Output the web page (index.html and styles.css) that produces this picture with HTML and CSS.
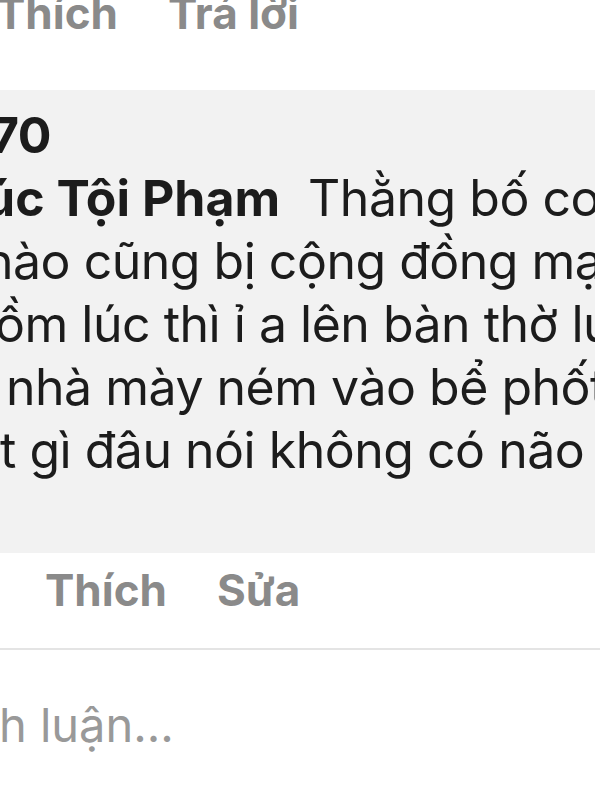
FILE: index.html
```
<!DOCTYPE html>
<html lang="vi">
<head>
    <meta charset="UTF-8">
    <meta name="viewport" content="width=device-width, initial-scale=1.0">
    <title>Bình luận</title>
    <link rel="stylesheet" href="styles.css">
</head>
<body>
    <div class="screen">
        <div class="actions actions-prev">
            <span class="action">Thích</span>
            <span class="action">Trả lời</span>
        </div>

        <div class="comment">
            <div class="bubble">
                <div class="line author">70</div>
                <div class="line"><span class="tag">úc Tội Phạm</span>Thằng bố con</div>
                <div class="line">nào cũng bị cộng đồng mạng</div>
                <div class="line shift-sm">ồm lúc thì ỉ a lên bàn thờ lu</div>
                <div class="line shift-lg">nhà mày ném vào bể phốt</div>
                <div class="line shift-none">t gì đâu nói không có não</div>
            </div>
            <div class="actions actions-own">
                <span class="action">Thích</span>
                <span class="action">Sửa</span>
            </div>
        </div>

        <div class="composer">
            <span class="placeholder">Bình luận...</span>
        </div>
    </div>
</body>
</html>
```

FILE: styles.css
```
body {
    margin: 0;
    background-color: #FFFFFF;
    font-family: Inter, "Noto Sans", sans-serif;
    color: #1C1C1C;
}
.screen {
    width: 600px;
    height: 800px;
    overflow: hidden;
}
.actions {
    display: flex;
    gap: 50px;
    font-size: 44px;
    font-weight: 700;
    color: #8A8A8A;
    white-space: nowrap;
}
.actions-prev {
    margin-top: -13px;
    margin-left: -4px;
    line-height: 52px;
}
.comment {
    margin-top: 51px;
}
.bubble {
    width: 595px;
    height: 463px;
    background-color: #F2F2F2;
    padding-top: 14px;
    box-sizing: border-box;
    overflow: hidden;
}
.line {
    margin-left: -16px;
    font-size: 50px;
    line-height: 63px;
    letter-spacing: -0.5px;
    white-space: nowrap;
}
.author {
    margin-left: -10px;
    font-weight: 700;
}
.shift-sm {
    margin-left: -5px;
}
.shift-lg {
    margin-left: 6px;
}
.shift-none {
    margin-left: 0;
}
.tag {
    font-weight: 700;
    letter-spacing: 0;
    margin-right: 28px;
}
.actions-own {
    padding-left: 45px;
    padding-top: 10px;
    height: 97px;
    box-sizing: border-box;
    border-bottom: 2px solid #E4E4E4;
}
.composer {
    padding-top: 46px;
    margin-left: -71px;
    white-space: nowrap;
}
.placeholder {
    font-size: 47px;
    color: #999999;
}
```
